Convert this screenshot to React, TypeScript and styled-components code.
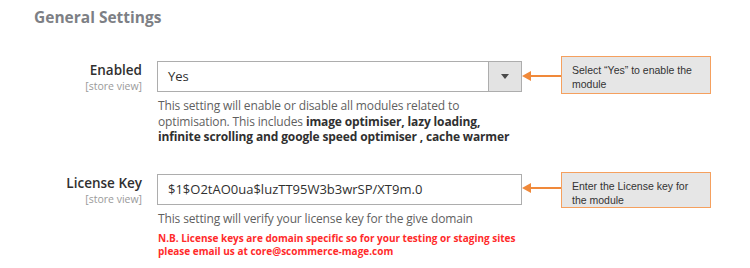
import React from 'react'
import styled, { createGlobalStyle } from 'styled-components'

const GlobalStyle = createGlobalStyle`
  html, body {
    margin: 0;
    padding: 0;
    background: #ffffff;
  }
  body {
    font-family: 'Open Sans', 'Liberation Sans', sans-serif;
    color: #333333;
  }
`

const Page = styled.div`
  width: 750px;
  height: 268px;
  overflow: hidden;
  padding-top: 7px;
  box-sizing: border-box;
`

const Title = styled.h2`
  margin: 0 0 0 34px;
  font-size: 15.5px;
  line-height: 20px;
  font-weight: 700;
  color: #7d7f85;
`

const Row = styled.div<{ $top: number }>`
  display: grid;
  grid-template-columns: 142px 380px 39px 150px;
  margin-top: ${(p) => p.$top}px;
`

const LabelCol = styled.div`
  text-align: right;
  padding-top: 1px;
`

const LabelText = styled.div`
  font-size: 13.5px;
  font-weight: 600;
  line-height: 17px;
  color: #303030;
`

const Scope = styled.div`
  margin-top: 1px;
  font-size: 10.5px;
  line-height: 13px;
  color: #9a9a9a;
`

const ControlCol = styled.div`
  margin-left: 15px;
`

const Field = styled.div`
  display: flex;
  height: 31px;
  border: 1px solid #adadad;
  box-sizing: border-box;
  background: #fff;
`

const FieldValue = styled.div`
  flex: 1;
  padding-left: 10px;
  font-size: 13px;
  line-height: 29px;
  color: #303030;
  white-space: nowrap;
`

const SelectButton = styled.div`
  width: 32px;
  border-left: 1px solid #adadad;
  background: #e3e3e3;
  display: flex;
  align-items: center;
  justify-content: center;

  &:after {
    content: '';
    border-left: 4px solid transparent;
    border-right: 4px solid transparent;
    border-top: 5px solid #4a4a4a;
  }
`

const Note = styled.div`
  margin-top: 6px;
  padding-left: 1px;
  font-size: 12px;
  line-height: 15.5px;
  letter-spacing: -0.14px;
  white-space: nowrap;
  color: #5f5f5f;

  b {
    font-weight: 700;
    color: #303030;
  }
`

const Warning = styled.div`
  margin-top: 6px;
  padding-left: 1px;
  font-size: 10px;
  line-height: 13px;
  font-weight: 700;
  white-space: nowrap;
  color: #ff2b2b;
`

const Pointer = styled.div<{ $y: number }>`
  position: relative;
  height: 2px;
  margin-top: ${(p) => p.$y}px;
  margin-left: 2px;
  background: #f0893a;

  &:before {
    content: '';
    position: absolute;
    left: -2px;
    top: -4px;
    border-top: 5px solid transparent;
    border-bottom: 5px solid transparent;
    border-right: 9px solid #f0893a;
  }
`

const Callout = styled.div<{ $top: number; $h: number }>`
  margin-top: ${(p) => p.$top}px;
  height: ${(p) => p.$h}px;
  box-sizing: border-box;
  border: 1px solid #f5a05e;
  background: #e6e6e6;
  padding: 6px 8px 0 10px;
  font-family: 'Liberation Sans', Arial, sans-serif;
  font-size: 10.5px;
  line-height: 14px;
  color: #333;
`

export default function App() {
  return (
    <Page>
      <GlobalStyle />
      <Title>General Settings</Title>

      <Row $top={34}>
        <LabelCol>
          <LabelText>Enabled</LabelText>
          <Scope>[store view]</Scope>
        </LabelCol>
        <ControlCol>
          <Field>
            <FieldValue>Yes</FieldValue>
            <SelectButton />
          </Field>
          <Note>
            This setting will enable or disable all modules related to
            <br />
            optimisation. This includes <b>image optimiser, lazy loading,</b>
            <br />
            <b>infinite scrolling and google speed optimiser , cache warmer</b>
          </Note>
        </ControlCol>
        <Pointer $y={14} />
        <Callout $top={-5} $h={38}>
          Select “Yes” to enable the
          <br />
          module
        </Callout>
      </Row>

      <Row $top={29}>
        <LabelCol>
          <LabelText>License Key</LabelText>
          <Scope>[store view]</Scope>
        </LabelCol>
        <ControlCol>
          <Field>
            <FieldValue>$1$O2tAO0ua$luzTT95W3b3wrSP/XT9m.0</FieldValue>
          </Field>
          <Note>This setting will verify your license key for the give domain</Note>
          <Warning>
            N.B. License keys are domain specific so for your testing or staging sites
            <br />
            please email us at core@scommerce-mage.com
          </Warning>
        </ControlCol>
        <Pointer $y={13} />
        <Callout $top={-2} $h={36}>
          Enter the License key for
          <br />
          the module
        </Callout>
      </Row>
    </Page>
  )
}
